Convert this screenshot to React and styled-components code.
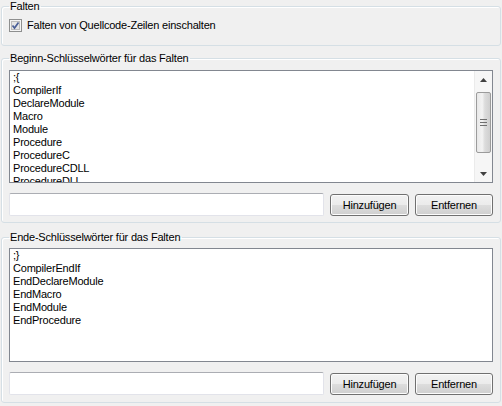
import React from "react";
import styled, { createGlobalStyle } from "styled-components";

const GlobalStyle = createGlobalStyle`
  html, body {
    margin: 0;
    padding: 0;
    background: #f0f0f0;
    font-family: "Liberation Sans", Arial, sans-serif;
    font-size: 11px;
    letter-spacing: -0.2px;
    color: #000;
  }
`;

const beginWords = [
  ";{",
  "CompilerIf",
  "DeclareModule",
  "Macro",
  "Module",
  "Procedure",
  "ProcedureC",
  "ProcedureCDLL",
  "ProcedureDLL",
];

const endWords = [
  ";}",
  "CompilerEndIf",
  "EndDeclareModule",
  "EndMacro",
  "EndModule",
  "EndProcedure",
];

const Page = styled.div`
  width: 500px;
  padding: 0 1px;
  display: flex;
  flex-direction: column;
`;

const Group = styled.fieldset`
  margin: ${(p) => p.$top || 0}px 0 0 0;
  padding: ${(p) => p.$padTop || 0}px 7px ${(p) => p.$padBottom || 0}px 7px;
  border: 1px solid #d5dfe5;
  border-radius: 3px;
  box-shadow: inset 1px 1px 0 #fff;
  min-width: 0;
`;

const Legend = styled.legend`
  padding: 0 2px 0 1px;
  margin-left: 0;
  line-height: 13px;
  height: 13px;
`;

const CheckRow = styled.label`
  display: flex;
  align-items: center;
  gap: 5px;
  height: 13px;
  line-height: 13px;
`;

const ListBox = styled.div`
  height: ${(p) => p.$height}px;
  box-sizing: border-box;
  border: 1px solid #828790;
  background: #fff;
  display: flex;
  overflow: hidden;
`;

const Items = styled.div`
  flex: 1;
  padding: 0 3px;
  overflow: hidden;
`;

const Item = styled.div`
  height: 13px;
  line-height: 13px;
  white-space: nowrap;
`;

const ScrollBar = styled.div`
  width: 17px;
  display: flex;
  flex-direction: column;
  align-items: center;
  background: #f6f6f6;
  border-left: 1px solid #ebebeb;
`;

const Arrow = styled.div`
  height: 17px;
  width: 17px;
  display: flex;
  align-items: center;
  justify-content: center;
`;

const Track = styled.div`
  flex: 1;
  width: 100%;
  padding-top: ${(p) => p.$offset}px;
  box-sizing: border-box;
`;

const Thumb = styled.div`
  height: ${(p) => p.$size}px;
  margin: 0 1px;
  box-sizing: border-box;
  border: 1px solid #9b9b9b;
  border-radius: 2px;
  background: linear-gradient(to right, #e8e8e8, #f3f3f3 40%, #dcdcdc 60%, #cfcfcf);
  display: flex;
  align-items: center;
  justify-content: center;
`;

const EditRow = styled.div`
  display: flex;
  align-items: center;
  gap: 6px;
  margin-top: 10px;
`;

const TextBox = styled.div`
  flex: 1;
  height: 23px;
  box-sizing: border-box;
  background: #fff;
  border: 1px solid #e2e3ea;
  border-top-color: #abadb3;
  border-radius: 2px;
`;

const Button = styled.button`
  width: ${(p) => p.$width}px;
  height: 22px;
  box-sizing: border-box;
  border: 1px solid #707070;
  border-radius: 3px;
  background: linear-gradient(#f2f2f2 0%, #ebebeb 50%, #dddddd 50%, #cfcfcf 100%);
  box-shadow: inset 0 0 0 1px #fcfcfc;
  font-family: "Liberation Sans", Arial, sans-serif;
  font-size: 11px;
  letter-spacing: -0.2px;
  color: #000;
  padding: 0;
`;

const CheckIcon = () => (
  <svg width="13" height="13" viewBox="0 0 13 13">
    <rect x="0.5" y="0.5" width="12" height="12" fill="#f4f4f4" stroke="#8e8f8f" />
    <rect x="2.5" y="2.5" width="8" height="8" fill="#e6e6e6" stroke="#bcbcbc" />
    <path d="M3.5 6.5 L5.5 9 L9.5 3.5" fill="none" stroke="#4a5f97" strokeWidth="1.7" />
  </svg>
);

const UpArrow = () => (
  <svg width="7" height="4" viewBox="0 0 7 4">
    <path d="M0 4 L3.5 0 L7 4 Z" fill="#404040" />
  </svg>
);

const DownArrow = () => (
  <svg width="7" height="4" viewBox="0 0 7 4">
    <path d="M0 0 L7 0 L3.5 4 Z" fill="#404040" />
  </svg>
);

const Grip = () => (
  <svg width="7" height="7" viewBox="0 0 7 7">
    <path d="M0 0.5 H7 M0 3.5 H7 M0 6.5 H7" stroke="#6f6f6f" strokeWidth="1" />
  </svg>
);

const KeywordList = ({ words, height, scroll }) => (
  <ListBox $height={height}>
    <Items>
      {words.map((w) => (
        <Item key={w}>{w}</Item>
      ))}
    </Items>
    {scroll && (
      <ScrollBar>
        <Arrow>
          <UpArrow />
        </Arrow>
        <Track $offset={4}>
          <Thumb $size={61}>
            <Grip />
          </Thumb>
        </Track>
        <Arrow>
          <DownArrow />
        </Arrow>
      </ScrollBar>
    )}
  </ListBox>
);

const EditLine = () => (
  <EditRow>
    <TextBox />
    <Button $width={79}>Hinzufügen</Button>
    <Button $width={78}>Entfernen</Button>
  </EditRow>
);

const App = () => {
  return (
    <>
      <GlobalStyle />
      <Page>
        <Group $padTop={6} $padBottom={13}>
          <Legend>Falten</Legend>
          <CheckRow>
            <CheckIcon />
            Falten von Quellcode-Zeilen einschalten
          </CheckRow>
        </Group>

        <Group $top={6} $padTop={5} $padBottom={6}>
          <Legend>Beginn-Schlüsselwörter für das Falten</Legend>
          <KeywordList words={beginWords} height={113} scroll />
          <EditLine />
        </Group>

        <Group $top={8} $padTop={4} $padBottom={7}>
          <Legend>Ende-Schlüsselwörter für das Falten</Legend>
          <KeywordList words={endWords} height={114} />
          <EditLine />
        </Group>
      </Page>
    </>
  );
};

export default App;
